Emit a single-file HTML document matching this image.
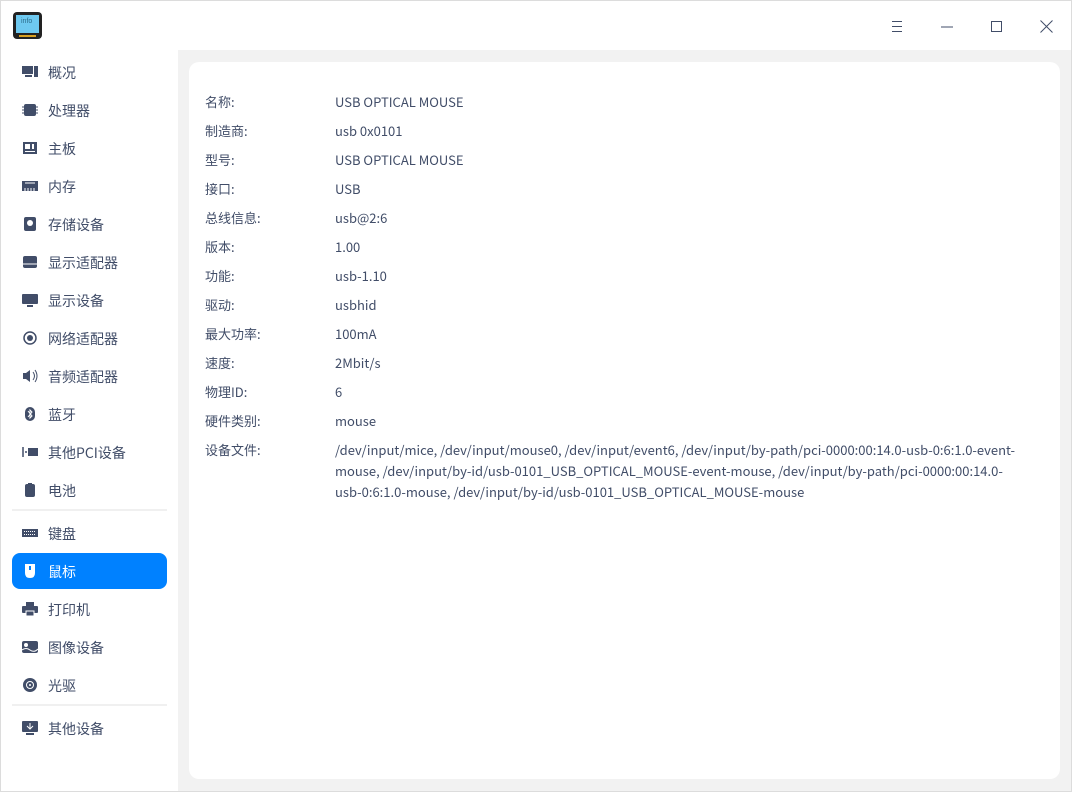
<!DOCTYPE html>
<html><head><meta charset="utf-8"><style>
*{margin:0;padding:0;box-sizing:border-box}
body{width:1072px;height:792px;background:#fff;font-family:"Noto Sans CJK SC","Liberation Sans",sans-serif;color:#414d68;position:relative;overflow:hidden}
.win{position:absolute;left:0;top:0;width:1072px;height:792px;border:1px solid #dcdcdc}
.main{position:absolute;left:178px;top:50px;width:893px;height:741px;background:#f2f2f2}
.card{position:absolute;left:189px;top:62px;width:871px;height:717px;background:#fff;border-radius:10px}
.it{position:absolute;left:12px;width:155px;height:36px;font-size:14px;line-height:38px;padding-left:36px}
.it svg{position:absolute;left:10px;top:11px}
.sel{background:#0081ff;color:#fff;border-radius:8px}
.sep{position:absolute;left:12px;width:155px;height:2px;background:#f0f0f0}
.row{position:absolute;left:205px;font-size:13px;line-height:21px;width:840px}
.row .k{position:absolute;left:0}
.row .v{position:absolute;left:130px;width:710px;white-space:nowrap}
</style></head><body>
<div class="win"></div>
<svg style="position:absolute;left:13px;top:12px" width="29" height="27" viewBox="0 0 29 27"><rect x="0" y="0" width="29" height="27" rx="4" fill="#222"/><rect x="3" y="3" width="23" height="18" fill="#6ec9f0"/><text x="8" y="11" font-size="7" fill="#2b6c8a" font-family="Liberation Sans">info</text><rect x="6" y="23" width="17" height="2" fill="#d8a020"/></svg>
<svg style="position:absolute;left:891px;top:20px" width="12" height="13"><path d="M1 1.5h10M1 6.5h10M1 11.5h10" stroke="#414d68" stroke-width="1"/></svg>
<svg style="position:absolute;left:941px;top:26px" width="12" height="2"><path d="M0 1h12" stroke="#414d68"/></svg>
<svg style="position:absolute;left:991px;top:21px" width="12" height="12"><rect x=".5" y=".5" width="10" height="10" fill="none" stroke="#414d68"/></svg>
<svg style="position:absolute;left:1040px;top:20px" width="13" height="13"><path d="M.5 .5l12 12M12.5 .5l-12 12" stroke="#414d68"/></svg>
<div class="main"></div>
<div class="card"></div>

<div class="it" style="top:54px"><svg width="16" height="14"><rect x="0" y="1" width="11" height="8" fill="#414d68"/><rect x="12" y="1" width="4" height="11" fill="#414d68"/><rect x="3" y="10" width="7" height="2" fill="#414d68"/></svg>概况</div>
<div class="it" style="top:92px"><svg width="16" height="14"><rect x="2" y="1" width="12" height="12" rx="2" fill="#414d68"/><path d="M0 4h16M0 7h16M0 10h16" stroke="#414d68"/></svg>处理器</div>
<div class="it" style="top:130px"><svg width="16" height="14"><rect x="1" y="1" width="14" height="12" fill="#414d68"/><rect x="3" y="3" width="5" height="5" fill="#fff"/><rect x="10" y="3" width="2" height="5" fill="#fff"/><rect x="3" y="10" width="10" height="1" fill="#fff"/></svg>主板</div>
<div class="it" style="top:168px"><svg width="16" height="14"><rect x="0" y="2" width="16" height="10" fill="#414d68"/><path d="M3 9v3M6 9v3M9 9v3M12 9v3M3 4h10" stroke="#fff"/></svg>内存</div>
<div class="it" style="top:206px"><svg width="16" height="14"><rect x="2" y="0" width="12" height="14" rx="2" fill="#414d68"/><circle cx="8" cy="6" r="3" fill="#fff"/></svg>存储设备</div>
<div class="it" style="top:244px"><svg width="16" height="14"><rect x="1" y="1" width="14" height="12" rx="2" fill="#414d68"/><path d="M1 9h14" stroke="#fff"/></svg>显示适配器</div>
<div class="it" style="top:282px"><svg width="16" height="14"><rect x="0" y="1" width="16" height="10" rx="1" fill="#414d68"/><rect x="5" y="12" width="6" height="2" fill="#414d68"/></svg>显示设备</div>
<div class="it" style="top:320px"><svg width="16" height="14"><circle cx="8" cy="7" r="6" fill="none" stroke="#414d68" stroke-width="1.5"/><circle cx="8" cy="7" r="3" fill="#414d68"/></svg>网络适配器</div>
<div class="it" style="top:358px"><svg width="16" height="14"><path d="M1 4h3l4-3v12l-4-3H1z" fill="#414d68"/><path d="M11 3q3 4 0 8M13 1q4 6 0 12" stroke="#414d68" fill="none"/></svg>音频适配器</div>
<div class="it" style="top:396px"><svg width="16" height="14"><rect x="3" y="0" width="10" height="14" rx="5" fill="#414d68"/><path d="M6 4l4 5-2 2V3l2 2-4 5" stroke="#fff" fill="none"/></svg>蓝牙</div>
<div class="it" style="top:434px"><svg width="16" height="14"><path d="M1 2v10M3 7h2" stroke="#414d68" stroke-width="1.5"/><rect x="6" y="3" width="10" height="8" fill="#414d68"/></svg>其他PCI设备</div>
<div class="it" style="top:472px"><svg width="16" height="14"><rect x="3" y="1" width="10" height="13" rx="2" fill="#414d68"/><rect x="6" y="0" width="4" height="2" fill="#414d68"/></svg>电池</div>
<div class="sep" style="top:509px"></div>
<div class="it" style="top:515px"><svg width="16" height="14"><rect x="0" y="3" width="16" height="8" fill="#414d68"/><path d="M2 5.5h12M2 8.5h12" stroke="#fff" stroke-dasharray="1 1"/></svg>键盘</div>
<div class="it sel" style="top:553px"><svg width="16" height="14"><path d="M3 0h10v9q0 5-5 5t-5-5z" fill="#fff"/><rect x="7" y="2" width="2" height="4" fill="#0081ff"/></svg>鼠标</div>
<div class="it" style="top:591px"><svg width="16" height="14"><rect x="4" y="0" width="8" height="4" fill="#414d68"/><rect x="0" y="4" width="16" height="7" rx="1" fill="#414d68"/><rect x="4" y="9" width="8" height="5" fill="#414d68" stroke="#fff"/></svg>打印机</div>
<div class="it" style="top:629px"><svg width="16" height="14"><rect x="0" y="1" width="16" height="12" rx="2" fill="#414d68"/><circle cx="4" cy="5" r="2" fill="#fff"/><path d="M0 10q4-3 8 0t8-1" stroke="#fff" fill="none"/></svg>图像设备</div>
<div class="it" style="top:667px"><svg width="16" height="14"><circle cx="8" cy="7" r="7" fill="#414d68"/><circle cx="8" cy="7" r="3.5" fill="none" stroke="#fff"/><circle cx="8" cy="7" r="1" fill="#fff"/></svg>光驱</div>
<div class="sep" style="top:704px"></div>
<div class="it" style="top:710px"><svg width="16" height="14"><rect x="0" y="0" width="16" height="11" rx="1" fill="#414d68"/><rect x="4" y="12" width="8" height="2" fill="#414d68"/><path d="M8 2v6M5 5l3 3 3-3" stroke="#fff" fill="none"/></svg>其他设备</div>

<div class="row" style="top:91px"><span class="k">名称:</span><span class="v">USB OPTICAL MOUSE</span></div>
<div class="row" style="top:120px"><span class="k">制造商:</span><span class="v">usb 0x0101</span></div>
<div class="row" style="top:149px"><span class="k">型号:</span><span class="v">USB OPTICAL MOUSE</span></div>
<div class="row" style="top:178px"><span class="k">接口:</span><span class="v">USB</span></div>
<div class="row" style="top:207px"><span class="k">总线信息:</span><span class="v">usb@2:6</span></div>
<div class="row" style="top:236px"><span class="k">版本:</span><span class="v">1.00</span></div>
<div class="row" style="top:265px"><span class="k">功能:</span><span class="v">usb-1.10</span></div>
<div class="row" style="top:294px"><span class="k">驱动:</span><span class="v">usbhid</span></div>
<div class="row" style="top:323px"><span class="k">最大功率:</span><span class="v">100mA</span></div>
<div class="row" style="top:352px"><span class="k">速度:</span><span class="v">2Mbit/s</span></div>
<div class="row" style="top:381px"><span class="k">物理ID:</span><span class="v">6</span></div>
<div class="row" style="top:410px"><span class="k">硬件类别:</span><span class="v">mouse</span></div>
<div class="row" style="top:439px"><span class="k">设备文件:</span><span class="v">/dev/input/mice, /dev/input/mouse0, /dev/input/event6, /dev/input/by-path/pci-0000:00:14.0-usb-0:6:1.0-event-<br>mouse, /dev/input/by-id/usb-0101_USB_OPTICAL_MOUSE-event-mouse, /dev/input/by-path/pci-0000:00:14.0-<br>usb-0:6:1.0-mouse, /dev/input/by-id/usb-0101_USB_OPTICAL_MOUSE-mouse</span></div>
</body></html>
